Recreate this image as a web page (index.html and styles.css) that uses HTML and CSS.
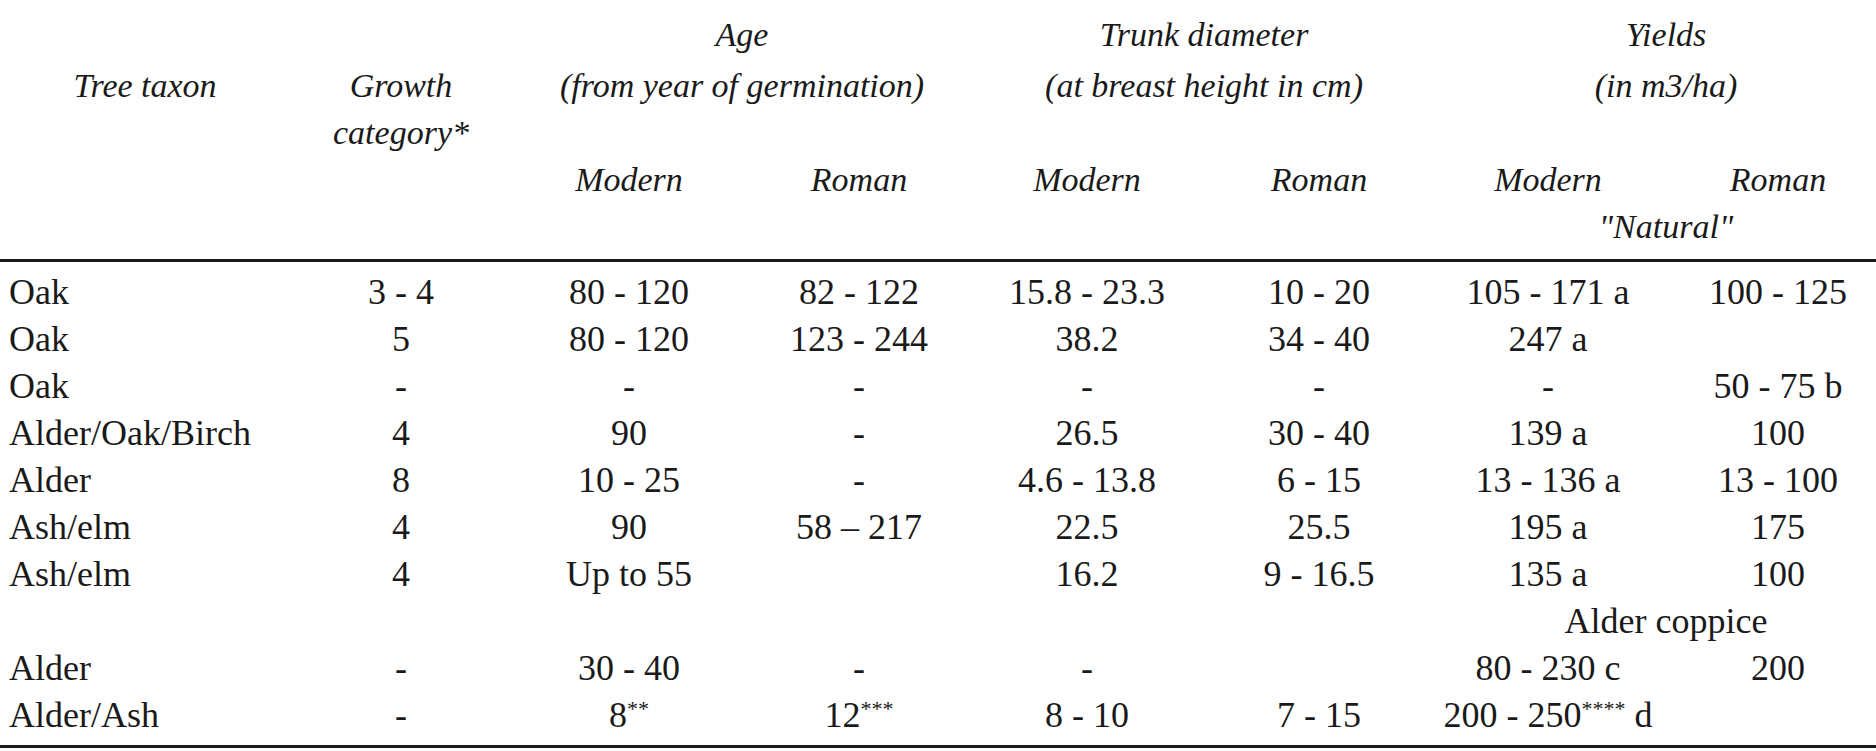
FILE: index.html
```html
<!DOCTYPE html>
<html lang="en">
<head>
<meta charset="utf-8">
<title>Tree taxa: modern and Roman growth</title>
<link rel="stylesheet" href="styles.css">
</head>
<body>
<table class="data">
  <colgroup>
    <col class="c1"><col class="c2"><col class="c3"><col class="c4">
    <col class="c5"><col class="c6"><col class="c7"><col class="c8">
  </colgroup>
  <thead>
    <tr class="h1">
      <th class="drop">Tree taxon</th>
      <th class="drop">Growth<br>category*</th>
      <th colspan="2"><span class="grp">Age</span>(from year of germination)</th>
      <th colspan="2"><span class="grp">Trunk diameter</span>(at breast height in cm)</th>
      <th colspan="2" class="r8"><span class="grp">Yields</span>(in m3/ha)</th>
    </tr>
    <tr class="h2">
      <th></th><th></th>
      <th>Modern</th><th>Roman</th>
      <th>Modern</th><th>Roman</th>
      <th>Modern</th><th class="r8">Roman</th>
    </tr>
    <tr class="h3">
      <th></th><th></th><th></th><th></th><th></th><th></th>
      <th colspan="2" class="r8">"Natural"</th>
    </tr>
  </thead>
  <tbody>
    <tr><td class="name">Oak</td><td>3 - 4</td><td>80 - 120</td><td>82 - 122</td><td>15.8 - 23.3</td><td>10 - 20</td><td>105 - 171 a</td><td class="r8">100 - 125</td></tr>
    <tr><td class="name">Oak</td><td>5</td><td>80 - 120</td><td>123 - 244</td><td>38.2</td><td>34 - 40</td><td>247 a</td><td class="r8"></td></tr>
    <tr><td class="name">Oak</td><td>-</td><td>-</td><td>-</td><td>-</td><td>-</td><td>-</td><td class="r8">50 - 75 b</td></tr>
    <tr><td class="name">Alder/Oak/Birch</td><td>4</td><td>90</td><td>-</td><td>26.5</td><td>30 - 40</td><td>139 a</td><td class="r8">100</td></tr>
    <tr><td class="name">Alder</td><td>8</td><td>10 - 25</td><td>-</td><td>4.6 - 13.8</td><td>6 - 15</td><td>13 - 136 a</td><td class="r8">13 - 100</td></tr>
    <tr><td class="name">Ash/elm</td><td>4</td><td>90</td><td>58 – 217</td><td>22.5</td><td>25.5</td><td>195 a</td><td class="r8">175</td></tr>
    <tr><td class="name">Ash/elm</td><td>4</td><td>Up to 55</td><td></td><td>16.2</td><td>9 - 16.5</td><td>135 a</td><td class="r8">100</td></tr>
    <tr><td class="name"></td><td></td><td></td><td></td><td></td><td></td><td colspan="2" class="r8">Alder coppice</td></tr>
    <tr><td class="name">Alder</td><td>-</td><td>30 - 40</td><td>-</td><td>-</td><td></td><td>80 - 230 c</td><td class="r8">200</td></tr>
    <tr><td class="name">Alder/Ash</td><td>-</td><td>8<sup class="ast">**</sup></td><td>12<sup class="ast">***</sup></td><td>8 - 10</td><td>7 - 15</td><td>200 - 250<sup class="ast">****</sup> d</td><td class="r8"></td></tr>
  </tbody>
</table>
</body>
</html>
```

FILE: styles.css
```css
html, body {
  margin: 0;
  padding: 0;
  background: #ffffff;
}

body {
  color: #1a1a1a;
  font-family: "Liberation Serif", "Times New Roman", serif;
}

.data {
  margin-top: 15px;
  width: 1876px;
  table-layout: fixed;
  border-collapse: collapse;
  border-spacing: 0;
}

.c1 { width: 290px; }
.c2 { width: 222px; }
.c3 { width: 234px; }
.c4 { width: 226px; }
.c5 { width: 230px; }
.c6 { width: 234px; }
.c7 { width: 224px; }
.c8 { width: 216px; }

.data th,
.data td {
  padding: 0;
}

.data thead th {
  font-size: 34px;
  font-style: italic;
  font-weight: normal;
  line-height: 47px;
  text-align: center;
  vertical-align: top;
  white-space: nowrap;
}

.data thead th.drop {
  padding-top: 47px;
}

.grp {
  display: block;
  margin-top: -4px;
  margin-bottom: 4px;
}

.data .h3 th {
  padding-bottom: 9px;
  border-bottom: 3px solid #1a1a1a;
}

.data tbody td {
  font-size: 36px;
  line-height: 47px;
  text-align: center;
  vertical-align: top;
  white-space: nowrap;
}

.data tbody td.name {
  text-align: left;
  padding-left: 9px;
}

.data th.r8,
.data td.r8 {
  padding-left: 20px;
}

.data tbody tr:first-child td {
  padding-top: 7px;
}

.data tbody tr:last-child td {
  padding-bottom: 6px;
  border-bottom: 3px solid #1a1a1a;
}

.ast {
  font-size: 22px;
  line-height: 0;
  vertical-align: 11px;
}
```
